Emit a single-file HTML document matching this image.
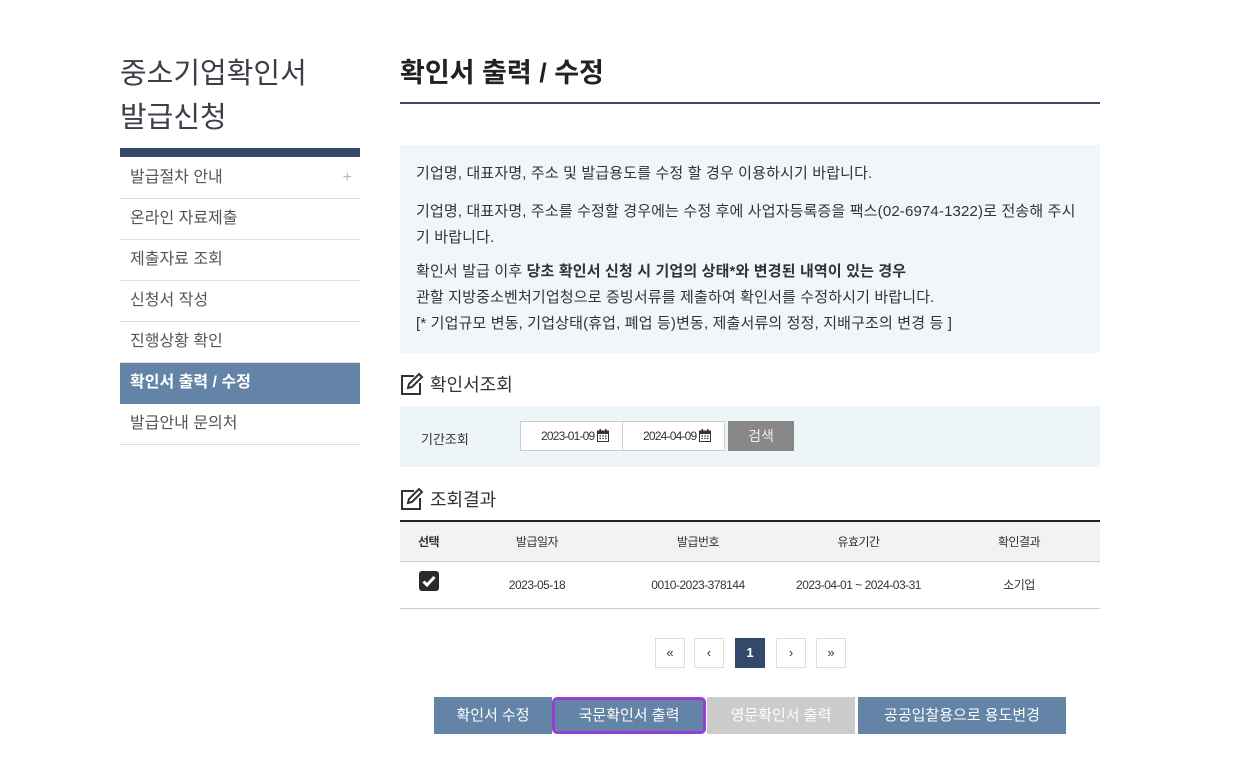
<!DOCTYPE html>
<html><head><meta charset="utf-8"><style>
*{margin:0;padding:0;box-sizing:border-box}
body{width:1240px;height:759px;background:#fff;font-family:"Liberation Sans","Noto Sans CJK KR",sans-serif;color:#333;position:relative;overflow:hidden}
.a{position:absolute}
.side h1{font-weight:400;font-size:29px;line-height:44px;color:#3a3f48}
.menu div{height:41px;border-bottom:1px solid #ddd;font-size:16px;color:#555;padding-left:10px;line-height:40px;position:relative}
.menu div.on{background:#6384a6;color:#fff;font-weight:700;border-bottom:none}
.info p{font-size:15px;line-height:26px;color:#333;letter-spacing:0.15px}
.sec{font-size:18px;color:#333;display:flex;align-items:center;gap:6px}
th,td{font-size:12px;text-align:center;letter-spacing:-0.5px}
.pg{position:absolute;top:638px;width:30px;height:30px;border:1px solid #ddd;text-align:center;line-height:28px;font-size:13px;color:#333}
.bt{position:absolute;top:697px;height:37px;line-height:37px;text-align:center;color:#fff;font-size:15px;background:#6384a6}
.cal{vertical-align:-2px;margin-left:3px}
</style></head><body>
<div class="a side" style="left:120px;top:52px"><h1>중소기업확인서</h1><h1>발급신청</h1></div>
<div class="a" style="left:120px;top:148px;width:240px;height:9px;background:#34496a"></div>
<div class="a menu" style="left:120px;top:158px;width:240px">
<div>발급절차 안내<span style="position:absolute;right:8px;color:#bbb">+</span></div>
<div>온라인 자료제출</div><div>제출자료 조회</div><div>신청서 작성</div><div>진행상황 확인</div>
<div class="on">확인서 출력 / 수정</div><div>발급안내 문의처</div></div>

<div class="a" style="left:400px;top:51px;font-size:27px;font-weight:700;color:#222">확인서 출력 / 수정</div>
<div class="a" style="left:400px;top:102px;width:700px;height:2px;background:#3a4a63"></div>
<div class="a info" style="left:400px;top:145px;width:700px;height:208px;background:#f0f6f9;padding:16px 16px 0 16px">
<p>기업명, 대표자명, 주소 및 발급용도를 수정 할 경우 이용하시기 바랍니다.</p>
<p style="margin-top:12px">기업명, 대표자명, 주소를 수정할 경우에는 수정 후에 사업자등록증을 팩스(02-6974-1322)로 전송해 주시기 바랍니다.</p>
<p style="margin-top:8px">확인서 발급 이후 <b>당초 확인서 신청 시 기업의 상태*와 변경된 내역이 있는 경우</b></p>
<p>관할 지방중소벤처기업청으로 증빙서류를 제출하여 확인서를 수정하시기 바랍니다.</p>
<p>[* 기업규모 변동, 기업상태(휴업, 폐업 등)변동, 제출서류의 정정, 지배구조의 변경 등 ]</p>
</div>
<svg width="0" height="0" style="position:absolute"><symbol id="ed" viewBox="0 0 24 24"><path d="M14 4H2v18h18V11" fill="none" stroke="#333" stroke-width="2"/><path d="M19 2l3 3-10 10-4 1 1-4z" fill="none" stroke="#333" stroke-width="2"/></symbol>
<symbol id="cal" viewBox="0 0 12 13"><rect x="0.5" y="2" width="11" height="10.5" fill="none" stroke="#333"/><rect x="0.5" y="2" width="11" height="3" fill="#333"/><rect x="2.5" y="0" width="1.5" height="3" fill="#333"/><rect x="8" y="0" width="1.5" height="3" fill="#333"/><path d="M2.5 7h1.5M5.3 7h1.5M8 7h1.5M2.5 9.5h1.5M5.3 9.5h1.5M8 9.5h1.5" stroke="#333" stroke-width="1.3"/></symbol></svg>
<div class="a sec" style="left:400px;top:371px"><svg width="24" height="24"><use href="#ed"/></svg>확인서조회</div>
<div class="a" style="left:400px;top:406px;width:700px;height:61px;background:#eef5f8"></div>
<div class="a" style="left:421px;top:429px;font-size:13px">기간조회</div>
<div class="a" style="left:520px;top:421px;width:205px;height:30px;background:#fff;border:1px solid #ccc;display:flex;font-size:12px;letter-spacing:-0.8px">
<div style="width:102px;border-right:1px solid #ccc;line-height:28px;padding-left:20px">2023-01-09<svg class="cal" width="12" height="13"><use href="#cal"/></svg></div>
<div style="flex:1;line-height:28px;padding-left:20px">2024-04-09<svg class="cal" width="12" height="13"><use href="#cal"/></svg></div></div>
<div class="a" style="left:728px;top:421px;width:66px;height:30px;background:#888;color:#eee;text-align:center;line-height:30px;font-size:14px">검색</div>
<div class="a sec" style="left:400px;top:486px"><svg width="24" height="24"><use href="#ed"/></svg>조회결과</div>
<table class="a" style="left:400px;top:520px;width:700px;border-collapse:collapse">
<tr style="background:#f2f2f2;border-top:2px solid #222;height:40px"><th style="width:57px">선택</th><th style="width:160px;font-weight:400">발급일자</th><th style="width:162px;font-weight:400">발급번호</th><th style="width:159px;font-weight:400">유효기간</th><th style="font-weight:400">확인결과</th></tr>
<tr style="height:47px;border-top:1px solid #ccc;border-bottom:1px solid #ccc"><td><svg width="20" height="20" viewBox="0 0 20 20" style="vertical-align:middle;margin-top:-8px"><rect width="20" height="20" rx="3" fill="#2a2a2a"/><path d="M4.5 10.5l3.5 3.5 7.5-8" fill="none" stroke="#fff" stroke-width="3"/></svg></td><td>2023-05-18</td><td>0010-2023-378144</td><td>2023-04-01 ~ 2024-03-31</td><td>소기업</td></tr>
</table>
<div class="pg" style="left:655px">«</div><div class="pg" style="left:694px">‹</div>
<div class="pg" style="left:735px;background:#34496a;color:#fff;border-color:#34496a;font-weight:700">1</div>
<div class="pg" style="left:776px">›</div><div class="pg" style="left:816px">»</div>
<div class="bt" style="left:434px;width:118px">확인서 수정</div>
<div class="bt" style="left:552px;width:154px;border:3px solid #9a3fd6;border-radius:5px;line-height:31px">국문확인서 출력</div>
<div class="bt" style="left:707px;width:148px;background:#ccc">영문확인서 출력</div>
<div class="bt" style="left:858px;width:208px">공공입찰용으로 용도변경</div>
</body></html>
